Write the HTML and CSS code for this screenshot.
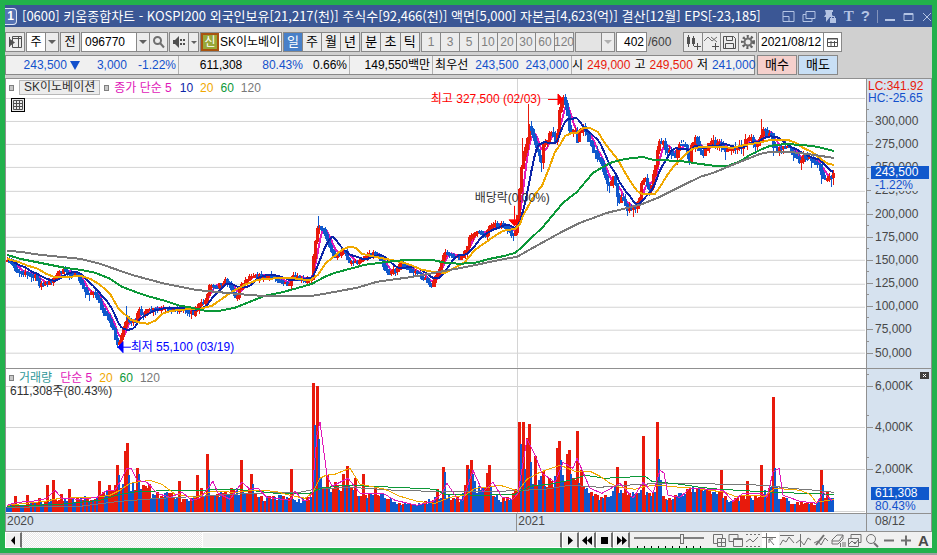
FILE: index.html
```
<!DOCTYPE html>
<html lang="ko">
<head>
    <meta charset="UTF-8">
    <meta name="viewport" content="width=device-width, initial-scale=1.0">
    <title>[0600] 키움종합차트</title>
    <link rel="stylesheet" href="styles.css">
</head>
<body>
    <div class="window">
        <header class="title-bar">
            <span class="win-no">1</span>
            <h1>[0600] 키움종합차트 - KOSPI200 외국인보유[21,217(천)] 주식수[92,466(천)] 액면[5,000] 자본금[4,623(억)] 결산[12월] EPS[-23,185]</h1>
            <div class="win-buttons">
                <button aria-label="화면 분할"><svg width="13" height="13"><path d="M1 1.500h11v10H1zM1 6.500h6v5"/></svg></button>
                <button aria-label="복사"><svg width="14" height="13"><path d="M4 1.500h9v7H4zM4 4.500H1v7h9v-3"/></svg></button>
                <button aria-label="고정"><svg width="14" height="13"><path class="fill" d="M2 0h8v2H9v3l2 2H7l-4 5V7H1l2-3zM7 8h6v5H7z"/><path d="M8.500 8V6.500h3V8"/></svg></button>
                <button class="glyph serif">T</button>
                <button class="glyph">?</button>
                <i></i>
                <button aria-label="최소화"><svg width="11" height="13"><path class="thick" d="M0 10h10"/></svg></button>
                <button aria-label="최대화"><svg width="12" height="13"><path d="M1 3.500h9v7H1zM1 4.500h9"/></svg></button>
                <button aria-label="닫기"><svg width="10" height="13"><path d="M1 3l8 8M9 3l-8 8"/></svg></button>
            </div>
        </header>

        <div class="toolbar">
            <div class="group">
                <button aria-label="목록"><svg width="15" height="14"><path class="dark" d="M4.500 1.500h9v11h-9zM10.500 1.500v11M4.500 3.500h9M1.500 2v10"/><path class="solid" d="M2 4l5 3.500L2 11z"/></svg></button>
            </div>
            <div class="group">
                <button class="white">주</button>
                <button class="drop" aria-label="구분 선택"></button>
            </div>
            <div class="group"><button>전</button></div>
            <div class="group">
                <input class="code" type="text" value="096770" aria-label="종목코드">
                <button class="drop" aria-label="최근 종목"></button>
                <button aria-label="종목 검색"><svg width="13" height="14"><circle class="ring" cx="5.500" cy="5.500" r="3.500"/><path class="handle" d="M8 8l4 4.500"/></svg></button>
            </div>
            <div class="group">
                <button class="sound" aria-label="음성"><svg width="14" height="14"><path class="solid" d="M1 5h2l4-4v12L3 9H1zM8 4h2v2H8zM8 8h2v2H8zM11 4h2v2h-2zM11 8h2v2h-2z"/></svg></button>
                <button class="drop thin" aria-label="음성 선택"></button>
            </div>
            <div class="group name-box">
                <span class="credit">신</span>
                <input type="text" value="SK이노베이션" aria-label="종목명">
            </div>
            <div class="group periods days">
                <button class="active">일</button><button>주</button><button>월</button><button>년</button>
            </div>
            <div class="group periods intraday">
                <button>분</button><button>초</button><button>틱</button>
            </div>
            <div class="group periods minutes">
                <button disabled>1</button><button disabled>3</button><button disabled>5</button><button disabled>10</button><button disabled>20</button><button disabled>30</button><button disabled>60</button><button disabled>120</button>
            </div>
            <div class="group off">
                <input class="tick" type="text" disabled aria-label="틱 단위">
                <button class="drop" disabled aria-label="틱 단위 선택"></button>
            </div>
            <div class="group count"><input type="text" value="402" aria-label="봉 개수"></div>
            <span class="total">/600</span>
            <div class="group">
                <button aria-label="차트 추가"><svg width="15" height="15"><path class="solid" d="M1 2h3v7H1zM6 3h3v6H6z"/><path class="dark" d="M2.500 0v12M7.500 1v10M8 11.500h7M11.500 8v7"/></svg></button>
                <button aria-label="지표 추가"><svg width="15" height="15"><path class="line" d="M0 6l4-4 4 4 5-4M7 2l6 5"/><path class="dark" d="M8 11.500h7M11.500 8v7"/></svg></button>
                <button aria-label="저장"><svg width="13" height="13"><path class="dark" d="M.5.5h10l2 2v10H.5zM3.500.5v4h6v-4M2.500 12V7.500h8V12"/></svg></button>
                <button aria-label="설정"><svg width="14" height="14"><circle class="gear" cx="7" cy="7" r="5.500"/><circle class="ring" cx="7" cy="7" r="3.500"/></svg></button>
            </div>
            <div class="group">
                <input class="date" type="text" value="2021/08/12" aria-label="기준일">
                <button class="white" aria-label="달력"><svg width="13" height="12"><path class="dark" d="M1.500 2.500h10v8h-10zM1 3h11M2 6.500h9M5 5v5M8.500 5v5"/></svg></button>
            </div>
        </div>

        <div class="quote-row">
            <div class="quote">
                <div class="cell price down"><b>243,500</b><i class="arrow"></i><b>3,000</b><b>-1.22%</b></div>
                <div class="cell volume"><b>611,308</b><b class="down">80.43%</b><b>0.66%</b></div>
                <div class="cell amount"><b>149,550백만</b></div>
                <div class="cell best">최우선<b class="down">243,500</b><b class="down">243,000</b></div>
                <div class="cell ohlc">시<b class="up">249,000</b>고<b class="up">249,500</b>저<b class="down">241,000</b></div>
            </div>
            <button class="order buy">매수</button>
            <button class="order sell">매도</button>
        </div>

        <main class="chart">
            <section class="row price-row">
                <div class="plot">
                    <svg id="price" viewBox="6 79 860 289" preserveAspectRatio="none"></svg>
                    <div class="legend">
                        <i class="mark"></i><span class="stock">SK이노베이션</span><i class="mark"></i>
                        <span class="ma5">종가 단순 5</span><span class="ma10">10</span><span class="ma20">20</span><span class="ma60">60</span><span class="ma120">120</span>
                    </div>
                    <button class="table-btn" aria-label="표 보기"><svg width="10" height="10"><path class="dark" d="M.5.5h9v9h-9zM.5 3.500h9M.5 6.500h9M3.500 0v10M6.500 0v10"/></svg></button>
                    <span class="note high">최고 327,500 (02/03)</span>
                    <span class="note drop-note">배당락(0.00%)</span>
                    <span class="note low">최저 55,100 (03/19)</span>
                </div>
                <div class="axis">
                    <ul class="scale">
                        <li>300,000</li><li>275,000</li><li>250,000</li><li>225,000</li><li>200,000</li><li>175,000</li>
                        <li>150,000</li><li>125,000</li><li>100,000</li><li>75,000</li><li>50,000</li>
                    </ul>
                    <div class="limits"><span class="up">LC:341.92</span><span class="down">HC:-25.65</span></div>
                    <div class="tag"><strong>243,500</strong><span>-1.22%</span></div>
                </div>
            </section>

            <section class="row volume-row">
                <div class="plot">
                    <svg id="volume" viewBox="6 369 860 144" preserveAspectRatio="none"></svg>
                    <div class="legend">
                        <i class="mark"></i><span class="vol">거래량</span><span class="ma5">단순 5</span><span class="ma20">20</span><span class="ma60">60</span><span class="ma120">120</span>
                    </div>
                    <p class="vol-now">611,308주(80.43%)</p>
                </div>
                <div class="axis">
                    <ul class="scale"><li>6,000K</li><li>4,000K</li><li>2,000K</li></ul>
                    <button class="close-pane" aria-label="거래량 닫기"><svg width="9" height="7"><path d="M3 2l3 3M6 2L3 5"/></svg></button>
                    <div class="tag"><strong>611,308</strong><span>80.43%</span></div>
                </div>
            </section>

            <div class="row time-row">
                <div class="years"><span>2020</span><span>2021</span></div>
                <div class="today">08/12</div>
            </div>
        </main>

        <footer class="bottom-bar">
            <button class="key" aria-label="왼쪽"><svg width="15" height="15"><path d="M9 3v9L5 7.500z"/></svg></button>
            <div class="track"><div class="thumb"></div></div>
            <button class="key" aria-label="오른쪽"><svg width="15" height="15"><path d="M5 3v9l5-4.500z"/></svg></button>
            <button class="key" aria-label="뒤로"><svg width="15" height="15"><path d="M7 3v9L2 7.500zM12 3v9L7 7.500z"/></svg></button>
            <button class="key" aria-label="정지"><svg width="15" height="15"><path d="M4 4h7v7H4z"/></svg></button>
            <button class="key" aria-label="앞으로"><svg width="15" height="15"><path d="M3 3v9l5-4.500zM8 3v9l5-4.500z"/></svg></button>
            <div class="zoom-slider"><input type="range" min="0" max="100" value="70" aria-label="확대 비율"></div>
            <div class="tools">
                <button aria-label="창 추가"><svg width="16" height="15"><path d="M2.500 1.500h9v9h-9z"/><path class="paper" d="M6.500 5.500h8v8h-8zM10.500 6v7M7 9.500h7"/></svg></button>
                <button aria-label="창 겹침"><svg width="16" height="15"><path d="M1 1.500h9v7H1z"/><path class="paper" d="M5.500 5.500h9v8h-9zM5 6.500h9"/></svg></button>
                <button aria-label="영역"><svg width="16" height="15"><path class="dots" d="M1 1.500h14M1 13.500h14"/><path d="M1 9l4-3 3 3 5-5"/></svg></button>
                <button class="on" aria-label="십자선"><svg width="16" height="15"><path d="M4.500 0v15M0 4.500h14M7 6l5 6M7 10V6h4"/></svg></button>
                <button aria-label="추세선"><svg width="16" height="15"><path d="M1 2.500h14M1 12l3-5 3 2 3-5 5 6"/></svg></button>
                <button aria-label="수직선"><svg width="16" height="15"><path d="M4.500 1v13M0 10l4-3 4 5 4-7 3 2"/></svg></button>
                <button aria-label="사선"><svg width="16" height="15"><path class="heavy" d="M3 12L11 2"/><path d="M1 10l4-2 3 4 4-7 3 3"/></svg></button>
                <button aria-label="모두 지우기"><svg width="16" height="15"><path d="M2 7l5-5h6l-4 6H2zM2 8v3h6l5-5V2M10.500 14v-4M13 14V9M15 14V9"/></svg></button>
                <button aria-label="차트 겹침"><svg width="16" height="15"><path d="M4 1.500h10v8H4z"/><path class="paper" d="M1.500 5.500h10v8h-10zM2 11l3-3 3 3 3-4"/></svg></button>
                <button aria-label="확대"><svg width="16" height="15"><circle cx="7" cy="6" r="4.500"/><path class="heavy" d="M10 10l4 4"/></svg></button>
                <button aria-label="축소"><svg width="16" height="15"><path class="heavy" d="M3 7.500h10"/></svg></button>
                <button aria-label="늘리기"><svg width="16" height="15"><path class="heavy" d="M3 7.500h10M8 2.500v10"/></svg></button>
                <button class="letter">A</button>
            </div>
        </footer>
    </div>
    <script src="chart.js"></script>
</body>
</html>
```
FILE: styles.css
```
* {
    box-sizing: border-box;
}

body {
    margin: 0;
    background: #a0a0a0;
    color: #000;
    font: 12px/14px "Liberation Sans", "Noto Sans CJK KR", sans-serif;
}

button, input {
    margin: 0;
    padding: 0;
    border: 0;
    border-radius: 0;
    background: none;
    color: inherit;
    font: inherit;
}

b { font-weight: normal; }
i { font-style: normal; }
svg { display: block; fill: none; }

.up { color: #e81a0c; }
.down { color: #1250cc; }
.ma5 { color: #e018b8; }
.ma10 { color: #0c24a8; }
.ma20 { color: #f0a800; }
.ma60 { color: #0c9838; }
.ma120 { color: #787878; }

.window {
    display: flex;
    flex-direction: column;
    height: calc(100vh - 2px);
    min-height: 400px;
    border: 5px solid #22b14c;
    background: #d0d0d0;
    overflow: hidden;
}

/* Title bar */
.title-bar {
    display: flex;
    align-items: center;
    flex: none;
    height: 22px;
    background: #3b5795;
    color: #fff;
}

.win-no {
    width: 12px;
    height: 17px;
    border: 1px solid #dce4f4;
    border-left: 0;
    border-radius: 0 4px 4px 0;
    background: #5573b4;
    line-height: 15px;
    text-align: center;
    font-weight: bold;
}

.title-bar h1 {
    flex: 1;
    margin: 0 0 0 5px;
    overflow: hidden;
    white-space: nowrap;
    font: 13px/20px "Noto Sans CJK KR", sans-serif;
}

.win-buttons {
    display: flex;
    align-items: center;
    gap: 7px;
    color: #b4c4e4;
}

.win-buttons i { width: 1px; height: 13px; background: #8494bc; }
.win-buttons path { stroke: currentColor; }
.win-buttons .fill { fill: currentColor; stroke: none; }
.win-buttons .thick { stroke-width: 2; }
.glyph { font: bold 15px/16px "Liberation Sans", sans-serif; }
.glyph.serif { font-family: "Liberation Serif", serif; }

/* Toolbar */
.toolbar {
    display: flex;
    align-items: center;
    flex: none;
    gap: 1px;
    height: 28px;
    padding-top: 2px;
}

.group {
    display: flex;
    height: 20px;
    border: 1px solid #888;
    background: #fff;
}

.group button {
    display: flex;
    align-items: center;
    justify-content: center;
    width: 18px;
    background: #ececec;
}

.group > * + * { border-left: 1px solid #888; }
.group button.white { background: #fff; }
.group .drop { width: 13px; }
.group .drop.thin { width: 10px; }

.drop::after {
    content: "";
    border: 4px solid transparent;
    border-top-color: #606060;
    border-bottom: 0;
}

.drop.thin::after { border-width: 3px 3px 0; }
.drop:disabled::after { border-top-color: #b0b0b0; }

.group input { padding-left: 3px; }
.group .code { width: 54px; }

.credit {
    width: 18px;
    border: 2px solid #a85410;
    background: #98a838;
    color: #fff;
    text-align: center;
}

.group.name-box input {
    width: 62px;
    padding-left: 1px;
    border: 0;
}

.group.periods button { flex: 1; width: auto; min-width: 0; }
.days { width: 77px; font-size: 13px; }
.intraday { width: 59px; font-size: 13px; }
.minutes { width: 153px; }
.group .active { background: #4880c8; color: #fff; }
.minutes button { color: #808080; }
.group.off, .off input { background: #e4e4e4; }
.group .tick { width: 25px; }
.count input { width: 29px; padding: 0 2px 0 0; text-align: right; }
.total { width: 34px; color: #404040; }
.group .date { width: 64px; padding-left: 2px; }

.dark { stroke: #505050; }
.line, .ring { stroke: #707070; }
.ring { stroke-width: 2; }
.handle { stroke: #707070; stroke-width: 2; }
.gear { stroke: #606060; stroke-width: 3; stroke-dasharray: 2 2; }
.solid { fill: #505050; }

/* Quote line */
.quote-row {
    display: flex;
    flex: none;
    gap: 1px;
    height: 20px;
    margin-bottom: 3px;
}

.quote {
    display: flex;
    width: 750px;
    border: 1px solid #888;
    background: #f0f0f0;
}

.cell {
    display: flex;
    align-items: center;
    justify-content: flex-end;
    flex: none;
    padding-right: 2px;
    white-space: nowrap;
}

.cell + .cell { border-left: 1px solid #b0b0b0; }
.cell.price { width: 172px; gap: 11px; }
.cell.volume { width: 171px; gap: 10px; }
.cell.volume b:first-child { margin-right: 10px; }
.cell.amount { width: 83px; }
.cell.best { width: 139px; gap: 7px; }
.cell.ohlc { flex: 1; gap: 4px; }

.arrow {
    margin: 0 6px 0 -8px;
    border: 5px solid transparent;
    border-top: 9px solid #1250cc;
    border-bottom: 0;
}

.order {
    width: 40px;
    border: 1px solid #888;
    font-size: 13px;
}

.buy { background: #f5d0cc; margin-left: 1px; }
.sell { background: #c8dff5; }

/* Chart */
.chart {
    display: flex;
    flex: 1;
    flex-direction: column;
    min-height: 0;
    border: 1px solid #909090;
    border-bottom: 0;
    background: #fff;
}

.row { display: flex; border-bottom: 1px solid #909090; }
.price-row { flex: 2 1 0; min-height: 0; }
.volume-row { flex: 1 1 0; min-height: 0; }

.plot { position: relative; flex: 1; min-width: 0; }

.plot > svg {
    position: absolute;
    width: 100%;
    height: 100%;
    shape-rendering: crispEdges;
}

.plot > svg .ma5, .plot > svg .ma10, .plot > svg .ma20,
.plot > svg .ma60, .plot > svg .ma120 { stroke: currentColor; }
#price polyline { stroke-width: 2; }
.grid { stroke: #d4d4d4; }
.rise { fill: #e81a0c; }
.fall { fill: #1058cc; }
.arrow-high { fill: #f00; stroke: #f00; }
.arrow-low { fill: #00f; stroke: #00f; }

.legend {
    position: relative;
    display: flex;
    align-items: center;
    gap: 7px;
    padding: 1px 0 0 3px;
    white-space: nowrap;
}

.volume-row .legend { padding-top: 2px; }

.mark {
    width: 5px;
    height: 6px;
    border: 1px solid #808080;
    background: #c8c8c8;
}

.mark + span { margin-left: -2px; }
.stock + .mark { margin-left: -3px; }

.stock {
    padding: 0 4px;
    border: 1px solid #b8b8b8;
    background: #ececec;
    color: #303030;
    line-height: 13px;
}

/* hangul in the legends is a size up from the digits */
.stock + .mark + .ma5, .vol { margin-right: 1px; }
.vol { color: #309898; }

.vol-now {
    position: relative;
    margin: -1px 0 0 4px;
    color: #303030;
}

.table-btn {
    position: absolute;
    top: 19px;
    left: 5px;
    padding: 1px;
    border: 1px solid #000;
    background: #e8e8e8;
}

.note {
    position: absolute;
    white-space: nowrap;
}

.high { top: 13px; left: 49.4%; color: #f00; }
.drop-note { top: 112px; left: 54.5%; color: #303030; }
.low { top: 261px; left: 14.5%; color: #00f; }

.axis, .today {
    position: relative;
    flex: none;
    width: 65px;
    border-left: 1px solid #909090;
    background: #d6e2ef;
    color: #484848;
}

.scale {
    display: flex;
    flex-direction: column;
    justify-content: space-between;
    height: 100%;
    margin: 0;
    padding: 35px 0 8px 8px;
    list-style: none;
}

.volume-row .scale { padding: 10px 0 37px 8px; }
.scale li { position: relative; }

.scale li::before, .scale li::after {
    content: "";
    position: absolute;
    top: 7px;
    left: -8px;
    width: 6px;
    height: 1px;
    background: #909090;
}

.scale li::after { top: -5px; width: 2px; }

.limits {
    position: absolute;
    top: 1px;
    left: 1px;
    line-height: 12px;
}

.limits span, .tag strong, .tag span { display: block; }

.tag {
    position: absolute;
    top: 87px;
    left: 4px;
    width: 58px;
    color: #1250cc;
    line-height: 12px;
}

.tag strong {
    padding-left: 4px;
    background: #1058cc;
    color: #fff;
    font-weight: normal;
    line-height: 13px;
}

.tag span { padding-left: 4px; }
.price-row .tag span { background: #d6e2ef; }
.volume-row .tag { top: auto; bottom: 1px; }

.close-pane {
    position: absolute;
    top: 3px;
    right: 2px;
    background: #404040;
}

.close-pane path { stroke: #fff; }

.time-row { flex: none; height: 18px; }

.years {
    display: flex;
    flex: 1;
    background: #d6e2ef;
    color: #484848;
}

.years span { flex: 511 1 0; padding-left: 1px; }
.years span + span { flex-grow: 349; border-left: 1px solid #909090; }
.today { padding-left: 8px; }

/* Scroll bar and drawing tools */
.bottom-bar {
    display: flex;
    flex: none;
    height: 16px;
    background: #f0f0f0;
}

.key {
    width: 17px;
    border: 1px solid #fff;
    border-right: 2px solid #707070;
    background: #f0f0f0;
}

.key path { fill: #000; }

.track {
    flex: 1;
    padding-left: 180px;
    background: repeating-conic-gradient(#e8e8e8 0 25%, #fff 0 50%) 0 0 / 2px 2px;
}

.thumb {
    height: 100%;
    border: 1px solid #fff;
    border-right: 2px solid #707070;
    background: #f0f0f0;
}

.zoom-slider {
    width: 78px;
    padding: 1px 4px;
    background: repeating-linear-gradient(90deg, #000 0 1px, transparent 1px 7px) 7px 14px / 68px 2px no-repeat;
}

.zoom-slider input {
    display: block;
    width: 70px;
    height: 11px;
    appearance: none;
    background: linear-gradient(#808080, #808080) 0 4px / 100% 2px no-repeat;
}

.zoom-slider input::-webkit-slider-thumb {
    appearance: none;
    width: 4px;
    height: 10px;
    border: 1px solid #707070;
    background: #f0f0f0;
}

.tools { display: flex; padding-left: 3px; }
.tools button { width: 17px; }
.tools .on { background: #fff; }
.tools path, .tools circle { stroke: #707070; }
.tools .paper { fill: #f0f0f0; }
.tools .dots { stroke-dasharray: 2 2; }
.tools .heavy { stroke-width: 2; }
.letter { color: #484848; font: bold 15px/15px "Liberation Sans", sans-serif; }
```
FILE: chart.js
```
// Points are "x,y" in the coordinates of each svg's viewBox.
const priceTrack = '7,261 12,262 16,270 20,271 25,272 30,275 36,276 39,283 47,283 51,280 56,274 62,270 68,272 74,274 79,278 82,286 87,293 92,292 97,297 101,307 106,313 110,322 114,330 116,345 119,342 122,333 124,322 127,318 130,320 135,322 138,310 142,312 148,310 155,309 182,308 188,311 193,312 198,305 202,302 206,300 208,286 212,284 217,285 222,282 226,280 231,287 236,298 241,284 246,279 250,275 255,274 262,276 268,275 275,277 280,280 288,285 293,276 299,278 305,281 311,277 313,255 315,240 318,224 322,228 326,235 330,248 334,256 339,253 344,250 349,262 354,261 360,261 365,255 370,252 376,254 381,258 384,268 389,272 395,269 401,263 406,267 412,271 417,272 422,277 428,281 432,285 436,274 440,269 442,255 446,252 452,254 457,257 461,256 466,250 470,235 474,232 480,232 485,234 488,228 492,222 496,224 501,223 506,228 512,234 516,231 518,200 520,180 522,158 524,150 526,145 529,128 532,132 535,142 538,156 541,160 543,145 548,136 552,132 556,142 559,108 562,97 566,104 569,130 572,130 574,128 577,140 580,130 583,125 587,132 590,145 595,153 600,156 603,170 606,178 609,187 612,175 615,182 618,199 622,198 626,206 630,210 634,206 638,204 642,178 646,180 650,188 654,170 657,148 660,141 663,143 668,150 675,154 680,143 685,144 688,162 692,142 695,136 699,150 702,158 706,145 711,142 716,142 721,144 726,152 730,148 741,147 746,137 751,138 756,145 760,138 763,128 767,135 770,130 773,145 776,150 780,145 785,147 790,147 794,152 798,160 803,157 808,156 813,160 818,163 821,172 824,178 828,177 834,172';

const priceLines = {
    ma20: '7,259 18,262 28,266 38,269 46,274 54,277 70,277 80,276 90,279 100,285 110,294 118,308 124,314 131,320 140,323 148,324 155,321 162,314 168,312 180,310 200,309 212,306 222,299 232,292 245,285 258,280 270,279 280,278 290,278 305,280 311,280 318,275 326,263 335,256 342,250 349,247 356,248 362,254 375,257 390,260 400,262 410,265 422,270 432,272 445,273 455,268 465,262 475,250 485,243 495,236 503,231 515,229 520,224 523,216 530,203 536,193 542,186 548,171 555,152 560,145 565,136 572,133 577,133 583,128 590,128 598,132 604,142 610,150 618,160 624,171 630,181 637,191 642,194 655,194 660,187 668,174 674,166 680,160 686,154 692,149 700,147 722,147 732,148 745,145 758,143 770,140 788,140 796,143 803,148 812,152 822,160 828,164 834,165',
    ma60: '7,255 20,259 35,262 50,265 65,268 80,270 95,273 110,279 122,287 135,292 150,297 165,301 180,306 192,308 205,311 220,311 235,308 250,302 265,296 280,293 295,289 312,284 325,277 335,273 350,269 365,265 380,263 395,261 412,260 432,260 445,263 460,264 475,263 490,259 505,256 515,253 520,249 543,227 563,203 577,192 593,173 610,163 625,159 643,157 653,160 680,161 700,164 715,166 728,166 741,161 750,155 760,150 770,146 785,144 800,145 812,146 822,148 834,151',
    ma120: '7,251 20,252 40,255 60,257 80,259 100,264 120,271 135,276 150,280 165,284 180,287 195,290 215,292 235,294 260,296 313,296 330,293 357,288 377,282 413,277 440,272 467,267 500,260 517,257 533,248 560,233 580,223 607,213 640,205 660,197 680,187 700,177 713,173 740,162 760,154 770,152 790,152 807,154 834,158'
};

const volumeBase = '7,506 30,503 60,500 100,497 110,490 122,480 130,488 140,482 150,495 165,492 180,500 210,497 235,490 250,490 262,498 285,497 300,501 308,497 322,488 335,488 350,486 360,496 375,493 385,496 395,502 410,505 425,502 435,497 445,495 460,500 470,482 480,490 490,490 500,499 512,498 518,480 540,480 550,482 565,480 580,485 600,497 615,490 630,492 640,490 650,495 660,490 670,500 690,488 710,490 720,492 730,500 745,497 760,497 770,485 780,497 795,503 815,504 825,494 834,498';
const risePeaks = '15,496 27,495 39,498 47,485 53,480 61,494 69,489 99,481 109,485 117,465 125,451 127,443 137,468 149,484 179,481 197,475 201,488 207,454 241,460 251,474 291,469 313,383 317,386 327,475 335,482 343,474 347,466 355,478 363,474 375,488 437,489 443,467 465,485 467,465 471,460 487,473 489,465 519,422 523,422 527,438 529,424 535,456 543,471 557,448 559,441 567,454 569,450 577,431 581,470 617,467 625,481 643,436 657,422 721,470 747,481 761,465 773,397 821,470';
const fallPeaks = '119,475 129,475 139,474 209,470 253,484 315,425 319,439 321,477 445,472 469,469 473,474 475,481 491,486 521,444 525,469 531,462 561,460 563,475 571,474 659,459 661,480 775,468 777,487 823,485 833,498';

const volumeLines = {
    ma120: '7,507 80,506 120,501 160,498 200,496 250,493 300,492 315,489 350,487 395,490 430,491 500,491 545,489 570,485 600,487 640,484 670,483 730,484 765,485 790,488 815,490 834,492',
    ma60: '7,506 60,504 100,500 120,494 140,491 200,490 225,489 250,490 275,493 310,493 320,488 345,485 395,487 435,489 445,494 480,495 515,494 530,486 550,484 570,480 585,475 605,478 645,476 652,481 680,484 700,487 720,489 755,491 800,493 834,494',
    ma20: '7,505 25,503 45,501 60,498 95,497 110,495 120,490 130,483 150,480 162,484 175,494 195,497 212,491 235,492 255,490 275,491 290,495 305,498 313,492 320,478 326,475 335,474 350,468 360,484 385,489 400,496 417,501 435,503 450,497 465,495 475,488 488,487 500,485 510,488 518,491 527,479 540,472 560,465 575,471 590,471 600,476 610,483 620,487 635,489 645,486 660,485 680,487 695,488 710,490 725,492 735,496 750,495 765,496 775,488 800,490 810,494 816,502 834,499',
    ma5: '7,505 17,502 33,501 47,498 55,490 62,498 80,499 97,497 107,490 115,490 122,478 127,468 131,468 137,480 147,482 157,493 170,497 182,492 192,500 200,498 208,488 213,481 218,493 230,499 242,482 250,489 258,488 267,497 290,500 295,491 303,500 308,500 312,493 317,435 320,422 327,475 332,486 348,478 360,493 383,493 395,500 417,505 433,501 442,493 447,483 457,498 463,500 473,470 483,492 493,482 502,497 513,499 518,493 527,439 535,455 542,473 555,482 563,462 573,468 577,458 583,472 590,488 602,493 620,483 633,498 643,482 653,493 660,470 664,473 668,495 680,497 690,488 710,489 723,490 733,501 743,493 760,493 767,497 773,472 779,468 783,495 800,501 817,503 823,492 832,500'
};

function points(text) {
    return text.split(' ').map(p => p.split(',').map(Number));
}

function valueAt(list, x) {
    for (let i = 1; i < list.length; i++) {
        if (x <= list[i][0]) {
            const [x0, y0] = list[i - 1];
            const [x1, y1] = list[i];
            return y0 + (y1 - y0) * (x - x0) / (x1 - x0);
        }
    }
    return list[list.length - 1][1];
}

let seed = 7;
function random() {
    seed = (seed * 16807) % 2147483647;
    return seed / 2147483647;
}

function rect(cls, x, y, w, h) {
    return `<rect class="${cls}" x="${x}" y="${Math.round(y)}" width="${w}" height="${Math.max(1, Math.round(h))}"/>`;
}

function polyline(cls, text) {
    return `<polyline class="${cls}" points="${text}"/>`;
}

function gridLines(ys, top, bottom) {
    return ys.map(y => `<path class="grid" d="M6 ${y}.5H865"/>`).join('') +
        `<path class="grid" d="M517.5 ${top}V${bottom}"/>`;
}

function average(closes, n) {
    return closes.map(([x], i) => {
        const part = closes.slice(Math.max(0, i - n + 1), i + 1);
        return `${x},${(part.reduce((sum, c) => sum + c[1], 0) / part.length).toFixed(1)}`;
    }).join(' ');
}

function drawPrice() {
    const track = points(priceTrack);
    const closes = [];
    let candles = '';
    let open = 260;
    for (let x = 7; x <= 834; x += 2) {
        const size = x > 517 ? 5 : 3;
        const close = valueAt(track, x) + (random() - 0.5) * size;
        const top = Math.min(open, close);
        const height = Math.abs(open - close) + 2;
        const cls = close <= open ? 'rise' : 'fall';
        candles += rect(cls, x, top - random() * size, 1, height + random() * size * 2);
        candles += rect(cls, x - 1, top, 3, height);
        closes.push([x, close]);
        open = close;
    }
    // the long wicks
    candles += rect('fall', 126, 306, 1, 14) + rect('fall', 318, 216, 1, 12) + rect('rise', 528, 104, 1, 30) +
        rect('rise', 522, 138, 1, 24) + rect('rise', 761, 119, 1, 14) + rect('fall', 821, 170, 1, 14);

    document.getElementById('price').innerHTML =
        gridLines([98, 121, 144, 167, 191, 214, 237, 260, 284, 307, 330, 353], 79, 368) +
        polyline('ma5', average(closes, 5)) + candles +
        polyline('ma10', average(closes, 10)) +
        Object.entries(priceLines).map(([cls, text]) => polyline(cls, text)).join('') +
        '<path class="arrow-high" d="M548 99.5h10M558 94v11l5-5.500zM514.5 206v14M509 220h11l-5.500 6z"/>' +
        '<path class="arrow-low" d="M131 347.5h-8M123 342v11l-5-5.500z"/>';
}

function drawVolume() {
    const base = points(volumeBase);
    const rises = new Map(points(risePeaks));
    const falls = new Map(points(fallPeaks));
    let bars = '';
    for (let x = 7; x <= 834; x += 2) {
        let y = valueAt(base, x);
        y += (random() - 0.4) * (512 - y) * 0.4;
        let cls = random() < 0.45 ? 'rise' : 'fall';
        if (rises.has(x)) {
            y = rises.get(x);
            cls = 'rise';
        } else if (falls.has(x)) {
            y = falls.get(x);
            cls = 'fall';
        }
        bars += rect(cls, x - 1, y, cls === 'rise' ? 3 : 2, 512 - y);
    }
    document.getElementById('volume').innerHTML =
        gridLines([386, 427, 469, 511], 369, 513) + bars +
        Object.entries(volumeLines).map(([cls, text]) => polyline(cls, text)).join('');
}

drawPrice();
drawVolume();
```
